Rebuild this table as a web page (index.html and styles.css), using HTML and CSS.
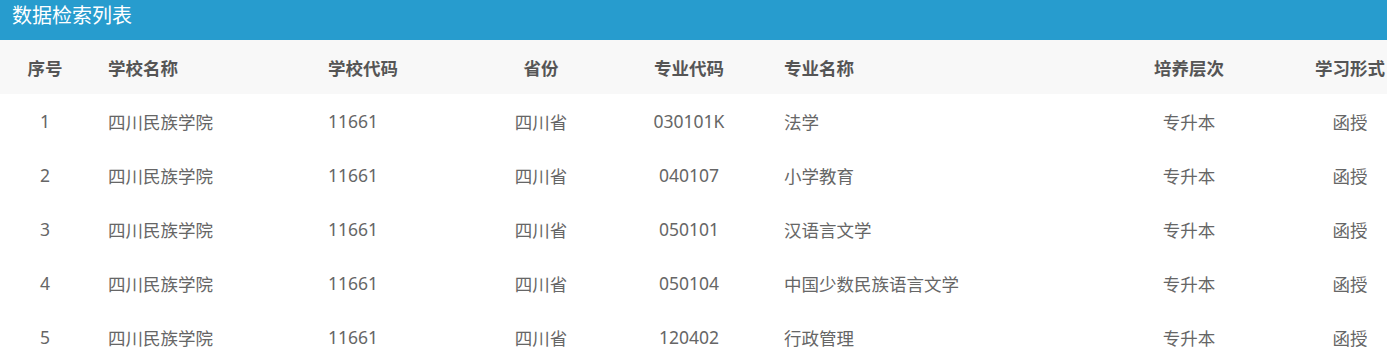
FILE: index.html
```html
<!DOCTYPE html>
<html lang="zh-CN">
<head>
<meta charset="utf-8">
<title>数据检索列表</title>
<link rel="stylesheet" href="styles.css">
</head>
<body>
<div class="panel">
  <div class="panel-title">数据检索列表</div>
  <div class="table">
    <div class="row head">
      <div class="c c1">序号</div>
      <div class="c c2">学校名称</div>
      <div class="c c3">学校代码</div>
      <div class="c c4">省份</div>
      <div class="c c5">专业代码</div>
      <div class="c c6">专业名称</div>
      <div class="c c7">培养层次</div>
      <div class="c c8">学习形式</div>
    </div>
    <div class="row">
      <div class="c c1">1</div>
      <div class="c c2">四川民族学院</div>
      <div class="c c3">11661</div>
      <div class="c c4">四川省</div>
      <div class="c c5">030101K</div>
      <div class="c c6">法学</div>
      <div class="c c7">专升本</div>
      <div class="c c8">函授</div>
    </div>
    <div class="row">
      <div class="c c1">2</div>
      <div class="c c2">四川民族学院</div>
      <div class="c c3">11661</div>
      <div class="c c4">四川省</div>
      <div class="c c5">040107</div>
      <div class="c c6">小学教育</div>
      <div class="c c7">专升本</div>
      <div class="c c8">函授</div>
    </div>
    <div class="row">
      <div class="c c1">3</div>
      <div class="c c2">四川民族学院</div>
      <div class="c c3">11661</div>
      <div class="c c4">四川省</div>
      <div class="c c5">050101</div>
      <div class="c c6">汉语言文学</div>
      <div class="c c7">专升本</div>
      <div class="c c8">函授</div>
    </div>
    <div class="row">
      <div class="c c1">4</div>
      <div class="c c2">四川民族学院</div>
      <div class="c c3">11661</div>
      <div class="c c4">四川省</div>
      <div class="c c5">050104</div>
      <div class="c c6">中国少数民族语言文学</div>
      <div class="c c7">专升本</div>
      <div class="c c8">函授</div>
    </div>
    <div class="row">
      <div class="c c1">5</div>
      <div class="c c2">四川民族学院</div>
      <div class="c c3">11661</div>
      <div class="c c4">四川省</div>
      <div class="c c5">120402</div>
      <div class="c c6">行政管理</div>
      <div class="c c7">专升本</div>
      <div class="c c8">函授</div>
    </div>
  </div>
</div>
</body>
</html>
```
FILE: styles.css
```css
html, body {
  margin: 0;
  padding: 0;
  background: #fff;
}
body {
  font-family: "Noto Sans", "Noto Sans CJK SC", sans-serif;
  overflow: hidden;
}
.panel {
  width: 1387px;
  overflow: hidden;
}
.panel-title {
  height: 40px;
  line-height: 31px;
  padding-left: 12px;
  background: #279cce;
  color: #fff;
  font-size: 20px;
}
.table {
  width: 1422px;
}
.row {
  display: grid;
  grid-template-columns: 90px 223px 157px 142px 154px 334px 178px 144px;
  height: 54px;
  align-items: center;
  font-size: 17.5px;
  color: #666;
}
.row.head {
  background: #f8f8f8;
  color: #555;
  font-weight: bold;
}
.c {
  white-space: nowrap;
}
.c1, .c4, .c5, .c7, .c8 {
  text-align: center;
}
.c2 { padding-left: 18px; }
.c3 { padding-left: 15px; }
.c6 { padding-left: 18px; }
```
